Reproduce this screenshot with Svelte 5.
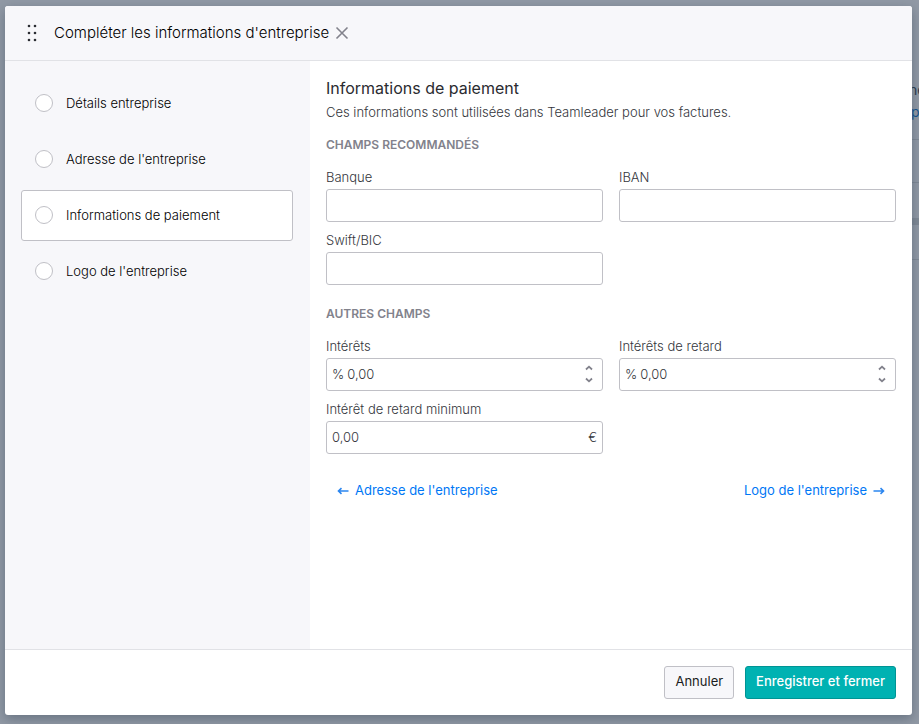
<script>
  const steps = [
    { id: 'details', label: 'Détails entreprise' },
    { id: 'address', label: "Adresse de l'entreprise" },
    { id: 'payment', label: 'Informations de paiement' },
    { id: 'logo', label: "Logo de l'entreprise" }
  ];
  let current = $state('payment');

  const recommended = [
    { id: 'bank', label: 'Banque' },
    { id: 'iban', label: 'IBAN' },
    { id: 'swift', label: 'Swift/BIC' }
  ];
  const others = [
    { id: 'interest', label: 'Intérêts', value: '0,00', prefix: '%', spinner: true },
    { id: 'late', label: 'Intérêts de retard', value: '0,00', prefix: '%', spinner: true },
    { id: 'minimum', label: 'Intérêt de retard minimum', value: '0,00', suffix: '€' }
  ];
</script>

{#snippet field(f)}
  <div class="field">
    <label for={f.id}>{f.label}</label>
    <div class="control">
      {#if f.prefix}<span>{f.prefix}</span>{/if}
      <input id={f.id} type="text" value={f.value ?? ''} />
      {#if f.suffix}<span>{f.suffix}</span>{/if}
      {#if f.spinner}
        <div class="spinner">
          <button type="button" aria-label="Augmenter">
            <svg width="8" height="6" viewBox="0 0 8 6"><path d="M1 4.5 4 1.7l3 2.8" /></svg>
          </button>
          <button type="button" aria-label="Diminuer">
            <svg width="8" height="6" viewBox="0 0 8 6"><path d="M1 1.5l3 2.8 3-2.8" /></svg>
          </button>
        </div>
      {/if}
    </div>
  </div>
{/snippet}

<div class="overlay">
  <div class="behind" aria-hidden="true">
    <p>ne</p>
    <p class="blue">p</p>
    <i></i><i></i><i class="thick"></i><i></i>
  </div>

  <div class="dialog" role="dialog" aria-labelledby="title">
    <header>
      <svg class="grip" width="12" height="18" viewBox="0 0 12 18">
        {#each [2, 9, 16] as y}
          <circle cx="3" cy={y} r="1.3" /><circle cx="9" cy={y} r="1.3" />
        {/each}
      </svg>
      <h1 id="title">Compléter les informations d'entreprise</h1>
      <button class="close" type="button" aria-label="Fermer">
        <svg width="14" height="14" viewBox="0 0 14 14"><path d="M1.5 1.5l11 11M12.5 1.5l-11 11" /></svg>
      </button>
    </header>

    <div class="body">
      <nav>
        {#each steps as step}
          <button type="button" class="step" class:active={current === step.id} onclick={() => (current = step.id)}>
            <span class="bullet"></span>{step.label}
          </button>
        {/each}
      </nav>

      <main>
        <h2>Informations de paiement</h2>
        <p class="intro">Ces informations sont utilisées dans Teamleader pour vos factures.</p>
        <h3>Champs recommandés</h3>
        <div class="grid">
          {#each recommended as f}{@render field(f)}{/each}
        </div>
        <h3 class="second">Autres champs</h3>
        <div class="grid">
          {#each others as f}{@render field(f)}{/each}
        </div>
        <div class="links">
          <a href="#address">
            <svg width="12" height="8" viewBox="0 0 12 8"><path d="M1.5 4H11.5M4.5 1.2 1.5 4l3 2.8" /></svg>
            Adresse de l'entreprise
          </a>
          <a href="#logo">
            Logo de l'entreprise
            <svg width="12" height="8" viewBox="0 0 12 8"><path d="M.5 4H10.5M7.5 1.2l3 2.8-3 2.8" /></svg>
          </a>
        </div>
      </main>
    </div>

    <footer>
      <button type="button" class="btn">Annuler</button>
      <button type="button" class="btn primary">Enregistrer et fermer</button>
    </footer>
  </div>
</div>

<style>
  * { box-sizing: border-box; }
  h1, h2, h3, p { margin: 0; }
  button, input { font: inherit; color: inherit; }
  button { cursor: pointer; }
  svg { fill: none; flex: none; stroke: currentColor; display: block; }

  .overlay {
    position: relative;
    display: flex;
    min-height: 100vh;
    padding: 6px 7px 9px 5px;
    overflow: hidden;
    background: #9199a5;
    font-family: Inter, "Noto Sans", sans-serif;
    font-size: 13px;
    line-height: 18px;
    color: #1a1c20;
  }
  .behind {
    position: absolute;
    top: 79px;
    right: 0;
    width: 9px;
    height: 181px;
    color: #2a3b4d;
    font-size: 14px;
    line-height: 22px;
  }
  .behind p { margin-left: -1px; }
  .behind .blue { margin-left: 1px; color: #17548f; }
  .behind i { display: block; height: 1px; margin-top: 42px; background: #808995; }
  .behind i:first-of-type { margin-top: 16px; }
  .behind i.thick { height: 7px; margin-top: 35px; }
  .behind i:last-of-type { margin-top: 34px; }

  .dialog {
    position: relative;
    flex: 1;
    min-width: 0;
    display: flex;
    flex-direction: column;
    overflow: hidden;
    border-radius: 3px;
    background: #fff;
    box-shadow: 0 4px 12px rgba(42, 59, 77, .4);
  }
  header {
    display: flex;
    align-items: center;
    height: 55px;
    padding: 0 21px;
    background: #f7f7fa;
    border-bottom: 1px solid #e1e2e6;
  }
  .grip { fill: #2b2d33; stroke: none; }
  h1 { margin-left: 16px; font-size: 15px; line-height: 24px; font-weight: 300; color: #000; }
  .close { display: flex; margin-left: 6px; padding: 0; border: 0; background: none; color: #82828c; }
  .close svg { stroke-width: 1.6; }

  .body { flex: 1; display: flex; }
  nav {
    flex: 0 0 305px;
    display: flex;
    flex-direction: column;
    gap: 5px;
    padding: 17px 17px 17px 16px;
    background: #f7f7fa;
  }
  .step {
    display: flex;
    align-items: center;
    gap: 13px;
    height: 51px;
    padding: 0 13px 1px;
    border: 1px solid transparent;
    border-radius: 3px;
    background: none;
    text-align: left;
    font-weight: 300;
    color: #000;
  }
  .step.active { background: #fff; border-color: #c0c0c6; }
  .bullet { width: 18px; height: 18px; border: 1px solid #c0c0c6; border-radius: 50%; background: #fff; }

  main { flex: 1; min-width: 0; padding: 15px 16px; color: #34363c; font-weight: 300; }
  h2 { font-size: 16px; line-height: 24px; font-weight: 400; color: #2a2b30; }
  .intro { margin-top: 3px; }
  h3 { margin: 15px 0 14px; font-size: 12px; font-weight: 600; color: #82828c; text-transform: uppercase; }
  h3.second { margin-top: 20px; }
  .grid { display: grid; grid-template-columns: 1fr 1fr; gap: 9px 16px; }
  .field { display: flex; flex-direction: column; gap: 3px; min-width: 0; }
  .control {
    display: flex;
    align-items: center;
    gap: 3px;
    height: 33px;
    padding: 0 5px 1px;
    border: 1px solid #c0c0c6;
    border-radius: 3px;
    background: #fff;
  }
  .control:focus-within { border-color: #0f7cf0; }
  input { flex: 1; min-width: 0; padding: 0; border: 0; outline: 0; background: none; }
  .spinner { display: flex; flex-direction: column; gap: 6px; padding-right: 4px; color: #82828c; }
  .spinner button { display: flex; padding: 0; border: 0; background: none; }
  .spinner svg { stroke-width: 1.8; }

  .links { display: flex; justify-content: space-between; margin-top: 27px; padding: 0 11px; }
  a { display: flex; align-items: center; gap: 6px; font-weight: 400; color: #0077f5; text-decoration: none; }
  a svg { margin-top: 2px; stroke-width: 1.6; color: #2b86f0; }

  footer {
    display: flex;
    justify-content: flex-end;
    gap: 11px;
    padding: 16px;
    border-top: 1px solid #e1e2e6;
  }
  .btn { height: 33px; padding: 0 10px 3px; border: 1px solid #c0c0c6; border-radius: 3px; background: #f7f7fa; }
  .primary { border-color: #009494; background: #00b2b2; color: #fff; font-weight: 500; }
</style>
